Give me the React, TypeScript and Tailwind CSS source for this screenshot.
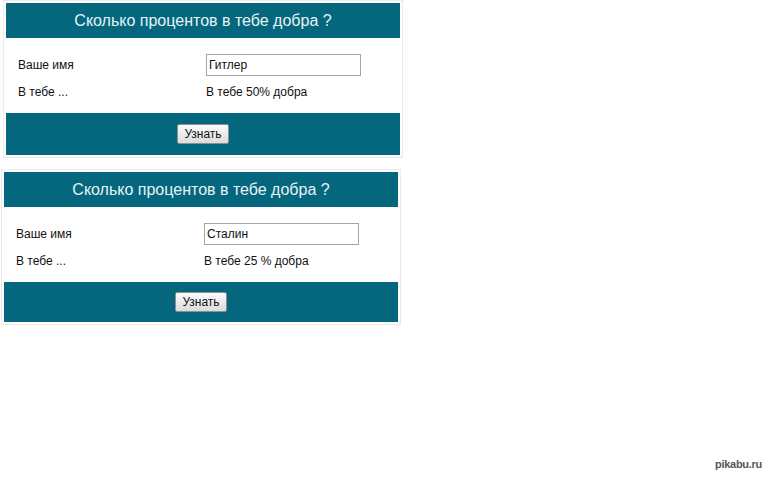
type FormProps = {
    name: string;
    result: string;
    footerHeight: string;
};

function KindnessForm({ name, result, footerHeight }: FormProps) {
    return (
        <div className="w-[400px] border border-[#ebebeb] p-[2px] bg-white">
            <div className="h-[35px] bg-[#05677e] flex items-center justify-center text-[16px] text-[#e6f3f6]">
                Сколько процентов в тебе добра ?
            </div>
            <div className="h-[75px] pt-[16px] text-[12px] text-[#111]">
                <div className="flex items-center h-[22px]">
                    <div className="w-[200px] pl-[12px]">Ваше имя</div>
                    <input
                        type="text"
                        defaultValue={name}
                        className="w-[155px] h-[22px] border border-[#a5a5a5] px-[2px] text-[12px] text-[#111] outline-none"
                    />
                </div>
                <div className="flex items-center h-[20px] mt-[6px]">
                    <div className="w-[200px] pl-[12px]">В тебе ...</div>
                    <div>{result}</div>
                </div>
            </div>
            <div className={`${footerHeight} bg-[#05677e] flex items-center justify-center`}>
                <button className="h-[20px] px-[6px] border border-[#8f8f8f] rounded-[2px] bg-gradient-to-b from-[#fbfbfb] to-[#dcdcdc] text-[12px] text-[#111] leading-none">
                    Узнать
                </button>
            </div>
        </div>
    );
}

export default function App() {
    return (
        <div className="relative w-[768px] h-[480px] bg-white font-['Liberation_Sans',Arial,sans-serif]">
            <div className="pl-[3px]">
                <KindnessForm name="Гитлер" result="В тебе 50% добра" footerHeight="h-[42px]" />
            </div>
            <div className="pl-[1px] mt-[11px]">
                <KindnessForm name="Сталин" result="В тебе 25 % добра" footerHeight="h-[40px]" />
            </div>
            <div className="absolute right-[6px] bottom-[8px] text-[11px] font-bold text-[#555] tracking-tight">
                pikabu.ru
            </div>
        </div>
    );
}
